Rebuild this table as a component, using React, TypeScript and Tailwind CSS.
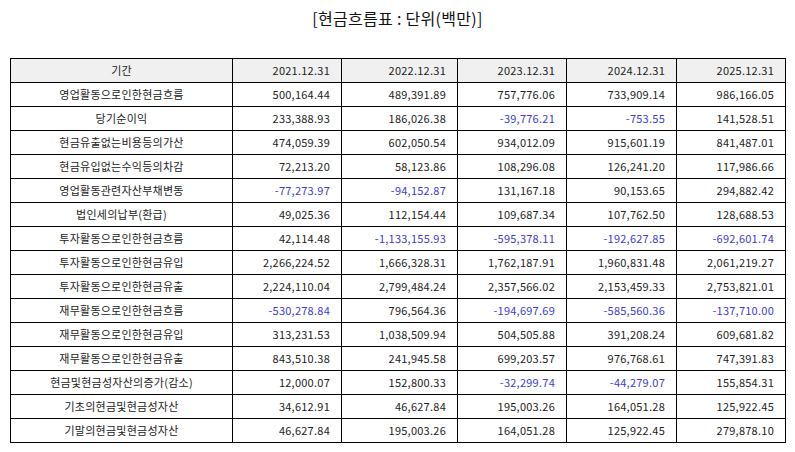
const font = { fontFamily: '"Noto Sans CJK KR", "Noto Sans", sans-serif' };

interface Row {
  label: string;
  values: number[];
}

const years = ['2021.12.31', '2022.12.31', '2023.12.31', '2024.12.31', '2025.12.31'];

const rows: Row[] = [
  { label: '영업활동으로인한현금흐름', values: [500164.44, 489391.89, 757776.06, 733909.14, 986166.05] },
  { label: '당기순이익', values: [233388.93, 186026.38, -39776.21, -753.55, 141528.51] },
  { label: '현금유출없는비용등의가산', values: [474059.39, 602050.54, 934012.09, 915601.19, 841487.01] },
  { label: '현금유입없는수익등의차감', values: [72213.2, 58123.86, 108296.08, 126241.2, 117986.66] },
  { label: '영업활동관련자산부채변동', values: [-77273.97, -94152.87, 131167.18, 90153.65, 294882.42] },
  { label: '법인세의납부(환급)', values: [49025.36, 112154.44, 109687.34, 107762.5, 128688.53] },
  { label: '투자활동으로인한현금흐름', values: [42114.48, -1133155.93, -595378.11, -192627.85, -692601.74] },
  { label: '투자활동으로인한현금유입', values: [2266224.52, 1666328.31, 1762187.91, 1960831.48, 2061219.27] },
  { label: '투자활동으로인한현금유출', values: [2224110.04, 2799484.24, 2357566.02, 2153459.33, 2753821.01] },
  { label: '재무활동으로인한현금흐름', values: [-530278.84, 796564.36, -194697.69, -585560.36, -137710.0] },
  { label: '재무활동으로인한현금유입', values: [313231.53, 1038509.94, 504505.88, 391208.24, 609681.82] },
  { label: '재무활동으로인한현금유출', values: [843510.38, 241945.58, 699203.57, 976768.61, 747391.83] },
  { label: '현금및현금성자산의증가(감소)', values: [12000.07, 152800.33, -32299.74, -44279.07, 155854.31] },
  { label: '기초의현금및현금성자산', values: [34612.91, 46627.84, 195003.26, 164051.28, 125922.45] },
  { label: '기말의현금및현금성자산', values: [46627.84, 195003.26, 164051.28, 125922.45, 279878.1] },
];

const fmt = (n: number) =>
  n.toLocaleString('en-US', { minimumFractionDigits: 2, maximumFractionDigits: 2 });

const colWidths = ['w-[222px]', 'w-[109px]', 'w-[116px]', 'w-[109px]', 'w-[110px]', 'w-[109px]'];

export default function App() {
  return (
    <div className="w-[795px] h-[452px] bg-white text-[#222]" style={font}>
      <h1 className="pt-[7px] h-[58px] text-center text-[16px] leading-[22px] tracking-[0.3px] text-[#111]">
        [현금흐름표 : 단위(백만)]
      </h1>
      <table className="ml-[10px] w-[776px] border-collapse table-fixed text-[11px] tracking-[0.25px]">
        <colgroup>
          {colWidths.map((w, i) => (
            <col key={i} className={w} />
          ))}
        </colgroup>
        <thead>
          <tr className="h-[24px] bg-[#f0f0f0]">
            <th className="border border-black font-normal text-center">기간</th>
            {years.map((y) => (
              <th key={y} className="border border-black font-normal text-right pr-[11px]">
                {y}
              </th>
            ))}
          </tr>
        </thead>
        <tbody>
          {rows.map((row) => (
            <tr key={row.label} className="h-[24px]">
              <td className="border border-black text-center">{row.label}</td>
              {row.values.map((v, i) => (
                <td
                  key={i}
                  className={`border border-black text-right pr-[11px] ${v < 0 ? 'text-[#3b3bd4]' : ''}`}
                >
                  {fmt(v)}
                </td>
              ))}
            </tr>
          ))}
        </tbody>
      </table>
    </div>
  );
}
